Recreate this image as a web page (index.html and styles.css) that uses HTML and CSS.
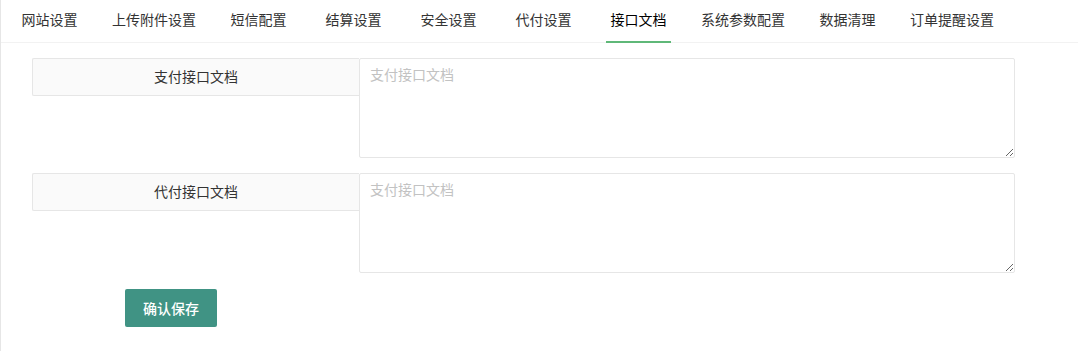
FILE: index.html
```html
<!DOCTYPE html>
<html lang="zh-CN">

<head>
    <meta charset="UTF-8">
    <meta name="viewport" content="width=device-width, initial-scale=1.0">
    <title>接口文档</title>
    <link rel="stylesheet" href="styles.css">
</head>

<body>
    <div class="page">
        <ul class="tab-title">
            <li>网站设置</li>
            <li>上传附件设置</li>
            <li>短信配置</li>
            <li>结算设置</li>
            <li>安全设置</li>
            <li>代付设置</li>
            <li class="active">接口文档</li>
            <li>系统参数配置</li>
            <li>数据清理</li>
            <li>订单提醒设置</li>
        </ul>

        <form class="doc-form">
            <div class="form-item">
                <label class="form-label">支付接口文档</label>
                <textarea class="form-textarea" placeholder="支付接口文档"></textarea>
            </div>
            <div class="form-item">
                <label class="form-label">代付接口文档</label>
                <textarea class="form-textarea" placeholder="支付接口文档"></textarea>
            </div>
            <div class="form-actions">
                <button type="button" class="btn-save">确认保存</button>
            </div>
        </form>
    </div>
</body>

</html>
```

FILE: styles.css
```css
body {
    margin: 0;
    padding: 0;
    font-family: "Helvetica Neue", "Liberation Sans", "Noto Sans CJK SC", sans-serif;
    font-size: 14px;
    color: #333;
    background-color: #fff;
}

.page {
    min-height: 351px;
    border-left: 1px solid #e6e6e6;
    box-sizing: border-box;
}

.tab-title {
    list-style: none;
    margin: 0;
    padding: 0 0 0 1px;
    display: flex;
    border-bottom: 1px solid #f2f2f2;
}

/* margin instead of padding so the underline only spans the 65px content */
.tab-title li {
    margin: 0 15px -1px;
    min-width: 65px;
    height: 41px;
    line-height: 41px;
    text-align: center;
    border-bottom: 2px solid transparent;
    color: #333;
    white-space: nowrap;
    cursor: pointer;
}

.tab-title li.active {
    color: #000;
    border-bottom-color: #5fb878;
}

.doc-form {
    padding: 15px 0 0 31px;
    width: 983px;
}

.form-item {
    display: flex;
    margin-bottom: 15px;
}

.form-label {
    width: 327px;
    height: 38px;
    line-height: 36px;
    box-sizing: border-box;
    text-align: center;
    background-color: #fafafa;
    border: 1px solid #e6e6e6;
    border-right: none;
    border-radius: 2px 0 0 2px;
    color: #333;
}

.form-textarea {
    flex-grow: 1;
    height: 100px;
    box-sizing: border-box;
    margin: 0;
    padding: 6px 10px;
    border: 1px solid #e6e6e6;
    border-radius: 2px;
    font-family: inherit;
    font-size: 14px;
    line-height: 20px;
    color: #333;
    outline: none;
}

.form-textarea::placeholder {
    color: #c2c2c2;
}

.form-actions {
    padding: 1px 0 0 93px;
}

.btn-save {
    width: 92px;
    height: 38px;
    border: none;
    border-radius: 2px;
    background-color: #409384;
    color: #fff;
    font-family: inherit;
    font-size: 14px;
    font-weight: 500;
    cursor: pointer;
}
```
